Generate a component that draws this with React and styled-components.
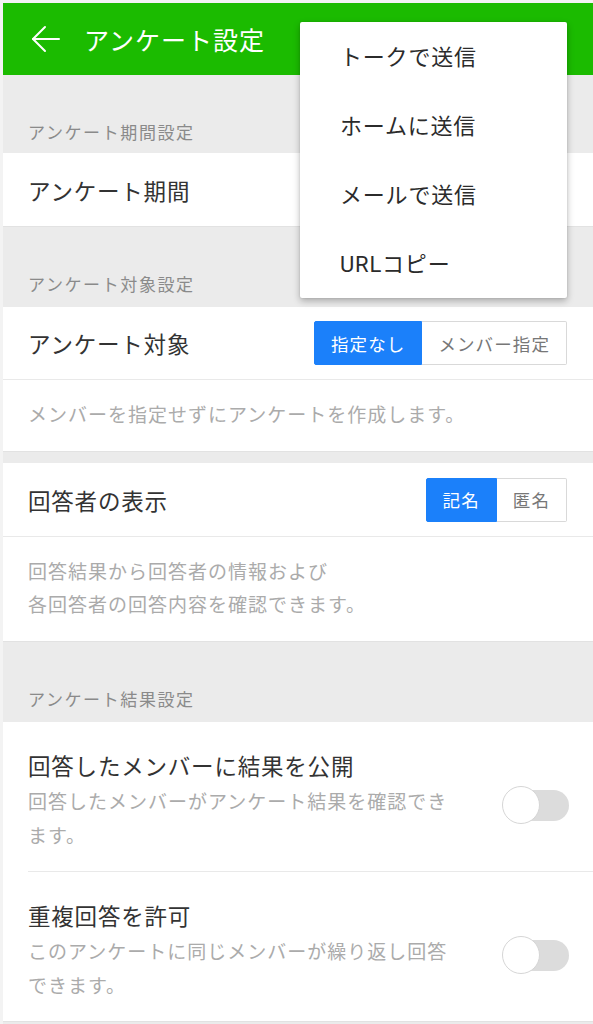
import React from 'react';
import styled, { createGlobalStyle } from 'styled-components';

const GlobalStyle = createGlobalStyle`
    html, body {
        margin: 0;
        padding: 0;
        background: #f3f3f3;
    }
    body {
        font-family: Roboto, "Noto Sans CJK JP", sans-serif;
        -webkit-font-smoothing: antialiased;
    }
`;

const Screen = styled.div`
    position: relative;
    width: 590px;
    margin: 3px 0 0 3px;
    background: #ebebeb;
    padding-bottom: 4px;
`;

const Header = styled.header`
    display: flex;
    align-items: center;
    height: 72px;
    background: #1bbb00;
    color: #fff;
`;

const BackButton = styled.button`
    display: flex;
    align-items: center;
    justify-content: center;
    width: 32px;
    height: 32px;
    margin: 0 22px 0 27px;
    padding: 0;
    border: none;
    background: none;
    color: #fff;
`;

const Title = styled.h1`
    margin: 0;
    font-size: 25px;
    font-weight: 400;
    letter-spacing: 1px;
`;

const SectionLabel = styled.div`
    padding: 46px 0 ${ props => props.tight ? 8 : 10 }px 25px;
    font-size: 17px;
    line-height: 24px;
    letter-spacing: 1.6px;
    color: #8a8a8a;
`;

const Card = styled.section`
    background: #fff;
    border-bottom: 1px solid #e2e2e2;
    margin-bottom: ${ props => props.gap || 0 }px;
`;

const Row = styled.div`
    display: flex;
    align-items: center;
    justify-content: space-between;
    height: ${ props => props.height }px;
    padding: 0 26px 0 25px;
    border-bottom: ${ props => props.divided ? '1px solid #e9e9e9' : 'none' };
`;

const RowTitle = styled.div`
    font-size: 22.5px;
    letter-spacing: 0.8px;
    color: #333;
`;

const Description = styled.div`
    padding: ${ props => props.pad }px 26px ${ props => props.pad }px 25px;
    font-size: 19px;
    line-height: 33px;
    letter-spacing: 1px;
    color: #ababab;
`;

const Segmented = styled.div`
    display: flex;
    height: 44px;
`;

const Segment = styled.button`
    height: 100%;
    padding: 0 16px;
    border: 1px solid ${ props => props.active ? '#1b80fa' : '#d9d9d9' };
    border-left-width: ${ props => props.first ? 1 : 0 }px;
    border-radius: ${ props => props.first ? '2px 0 0 2px' : '0 2px 2px 0' };
    background: ${ props => props.active ? '#1b80fa' : '#fff' };
    color: ${ props => props.active ? '#fff' : '#777' };
    font-family: inherit;
    font-size: 17.5px;
    letter-spacing: 1.1px;
`;

const ToggleRow = styled.div`
    display: flex;
    align-items: center;
    gap: 42px;
    margin-left: 25px;
    padding: 27px 24px 17px 0;
    border-bottom: ${ props => props.divided ? '1px solid #e9e9e9' : 'none' };
`;

const ToggleText = styled.div`
    flex: 1;
`;

const ToggleTitle = styled.div`
    font-size: 22.5px;
    line-height: 37px;
    letter-spacing: 0.8px;
    color: #333;
`;

const ToggleDesc = styled.div`
    font-size: 19px;
    line-height: 34px;
    letter-spacing: 1px;
    color: #ababab;
`;

const Switch = styled.div`
    position: relative;
    flex: none;
    width: 67px;
    height: 38px;
    margin-top: 7px;

    &::before {
        content: '';
        position: absolute;
        left: 3px;
        right: 0;
        top: 4px;
        height: 31px;
        border-radius: 16px;
        background: #dcdcdc;
    }

    &::after {
        content: '';
        position: absolute;
        left: 0;
        top: 0;
        width: 36px;
        height: 36px;
        border-radius: 50%;
        border: 1px solid #d6d6d6;
        background: #fff;
    }
`;

const Menu = styled.ul`
    position: absolute;
    top: 19px;
    left: 297px;
    width: 267px;
    margin: 0;
    padding: 0;
    list-style: none;
    background: #fff;
    border-radius: 2px;
    box-shadow: 0 3px 7px rgba( 0, 0, 0, 0.28 ), 0 0 2px rgba( 0, 0, 0, 0.12 );
`;

const MenuItem = styled.li`
    display: flex;
    align-items: center;
    height: 66px;
    padding: 0 0 3px 40px;
    font-size: 22px;
    letter-spacing: 0.8px;
    color: #2b2b2b;
`;

const menuItems = [ 'トークで送信', 'ホームに送信', 'メールで送信', 'URLコピー' ];

const ArrowIcon = () => (
    <svg width="30" height="28" viewBox="0 0 30 28" fill="none" stroke="currentColor" strokeWidth="2" strokeLinecap="round" strokeLinejoin="round">
        <path d="M28 14H2" />
        <path d="M14 2L2 14l12 12" />
    </svg>
);

export default function App() {
    return (
        <Screen>
            <GlobalStyle />
            <Header>
                <BackButton aria-label="戻る">
                    <ArrowIcon />
                </BackButton>
                <Title>アンケート設定</Title>
            </Header>

            <SectionLabel tight>アンケート期間設定</SectionLabel>
            <Card>
                <Row height={ 73 }>
                    <RowTitle>アンケート期間</RowTitle>
                </Row>
            </Card>

            <SectionLabel>アンケート対象設定</SectionLabel>
            <Card gap={ 11 }>
                <Row height={ 72 } divided>
                    <RowTitle>アンケート対象</RowTitle>
                    <Segmented>
                        <Segment first active>指定なし</Segment>
                        <Segment>メンバー指定</Segment>
                    </Segmented>
                </Row>
                <Description pad={ 19 }>メンバーを指定せずにアンケートを作成します。</Description>
            </Card>

            <Card>
                <Row height={ 73 } divided>
                    <RowTitle>回答者の表示</RowTitle>
                    <Segmented>
                        <Segment first active>記名</Segment>
                        <Segment>匿名</Segment>
                    </Segmented>
                </Row>
                <Description pad={ 19 }>
                    回答結果から回答者の情報および<br />
                    各回答者の回答内容を確認できます。
                </Description>
            </Card>

            <SectionLabel>アンケート結果設定</SectionLabel>
            <Card>
                <ToggleRow divided>
                    <ToggleText>
                        <ToggleTitle>回答したメンバーに結果を公開</ToggleTitle>
                        <ToggleDesc>回答したメンバーがアンケート結果を確認できます。</ToggleDesc>
                    </ToggleText>
                    <Switch />
                </ToggleRow>
                <ToggleRow>
                    <ToggleText>
                        <ToggleTitle>重複回答を許可</ToggleTitle>
                        <ToggleDesc>このアンケートに同じメンバーが繰り返し回答できます。</ToggleDesc>
                    </ToggleText>
                    <Switch />
                </ToggleRow>
            </Card>

            <Menu>
                { menuItems.map( ( item ) => (
                    <MenuItem key={ item }>{ item }</MenuItem>
                ) ) }
            </Menu>
        </Screen>
    );
}
